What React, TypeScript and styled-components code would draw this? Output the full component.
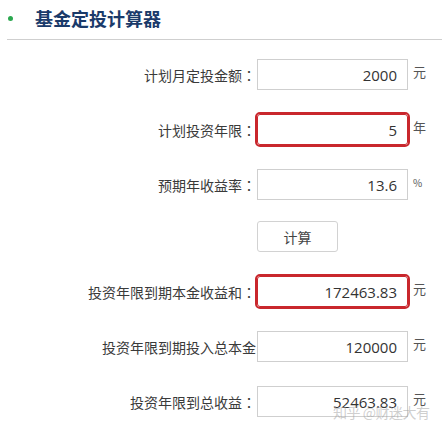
import React from "react";
import styled, { createGlobalStyle } from "styled-components";

const GlobalStyle = createGlobalStyle`
  html, body { margin: 0; padding: 0; background: #fff; }
  body { font-family: "Noto Sans CJK SC", "Noto Sans", sans-serif; color: #333; }
`;

const Page = styled.div`
  position: relative;
  width: 442px;
  height: 433px;
  overflow: hidden;
  background: #fff;
`;

const Header = styled.div`
  display: flex;
  align-items: center;
  height: 39px;
  margin-left: 7px;
  border-bottom: 1px solid #cfcfcf;
`;

const Bullet = styled.span`
  width: 5px;
  height: 5px;
  border-radius: 50%;
  background: #2ba84f;
  margin: 0 22px 2px 1px;
`;

const Title = styled.h1`
  margin: 0 0 4px;
  font-size: 18px;
  font-weight: 700;
  color: #1a3a6a;
`;

const Form = styled.div`
  display: flex;
  flex-direction: column;
  gap: 24px;
  padding-top: 19px;
`;

const Row = styled.div<{ $shift?: number }>`
  display: grid;
  grid-template-columns: 257px 151px auto;
  align-items: center;
  height: 31px;
  margin-top: ${(p) => p.$shift ?? 0}px;
`;

const Label = styled.div`
  display: flex;
  justify-content: flex-end;
  font-size: 14px;
  color: #3a3a3a;
  white-space: nowrap;
  padding-right: 1px;
`;

// fullwidth colon drawn centred in its box, as the reference font does
const Colon = styled.span`
  font-family: "Noto Sans CJK TC", "Noto Sans CJK SC", sans-serif;
  width: 14px;
  text-align: center;
`;

const Field = styled.div<{ $hot?: boolean }>`
  box-sizing: border-box;
  height: 31px;
  display: flex;
  align-items: center;
  justify-content: flex-end;
  padding-right: 10px;
  border: 1px solid ${(p) => (p.$hot ? "#c9272d" : "#cfcfcf")};
  outline: ${(p) => (p.$hot ? "2px solid #c9272d" : "none")};
  border-radius: ${(p) => (p.$hot ? "3px" : "0")};
  font-family: "Open Sans", "Noto Sans", sans-serif;
  font-size: 15px;
  color: #333;
  background: #fff;
`;

const Unit = styled.span<{ $small?: boolean }>`
  padding-left: 5px;
  font-size: ${(p) => (p.$small ? "10px" : "13px")};
  color: #555;
  align-self: start;
  padding-top: ${(p) => (p.$small ? "6px" : "3px")};
`;

const CalcButton = styled.button`
  box-sizing: border-box;
  width: 81px;
  height: 31px;
  border: 1px solid #d2d2d2;
  border-radius: 3px;
  background: #fff;
  font-family: "Noto Sans CJK SC", sans-serif;
  font-size: 14px;
  color: #444;
  padding: 0;
`;

const Watermark = styled.div`
  position: absolute;
  left: 333px;
  top: 402px;
  font-size: 14px;
  color: rgba(160, 160, 160, 0.5);
  white-space: nowrap;
  letter-spacing: -0.5px;
`;

type Item = { label: string; value: string; unit: string; hot?: boolean; small?: boolean; cut?: boolean };

const inputs: Item[] = [
  { label: "计划月定投金额", value: "2000", unit: "元" },
  { label: "计划投资年限", value: "5", unit: "年", hot: true },
  { label: "预期年收益率", value: "13.6", unit: "%", small: true },
];

const results: Item[] = [
  { label: "投资年限到期本金收益和", value: "172463.83", unit: "元", hot: true },
  { label: "投资年限到期投入总本金", value: "120000", unit: "元", cut: true },
  { label: "投资年限到总收益", value: "52463.83", unit: "元" },
];

const renderRow = (it: Item, shift?: number) => (
  <Row key={it.label} $shift={shift}>
    <Label>
      {it.label}
      {!it.cut && <Colon>：</Colon>}
    </Label>
    <Field $hot={it.hot}>{it.value}</Field>
    <Unit $small={it.small}>{it.unit}</Unit>
  </Row>
);

export default function App() {
  return (
    <Page>
      <GlobalStyle />
      <Header>
        <Bullet />
        <Title>基金定投计算器</Title>
      </Header>
      <Form>
        {inputs.map((it) => renderRow(it))}
        <Row $shift={-3}>
          <span />
          <CalcButton>计算</CalcButton>
        </Row>
        {results.map((it) => renderRow(it))}
      </Form>
      <Watermark>知乎 @财迷大有</Watermark>
    </Page>
  );
}
